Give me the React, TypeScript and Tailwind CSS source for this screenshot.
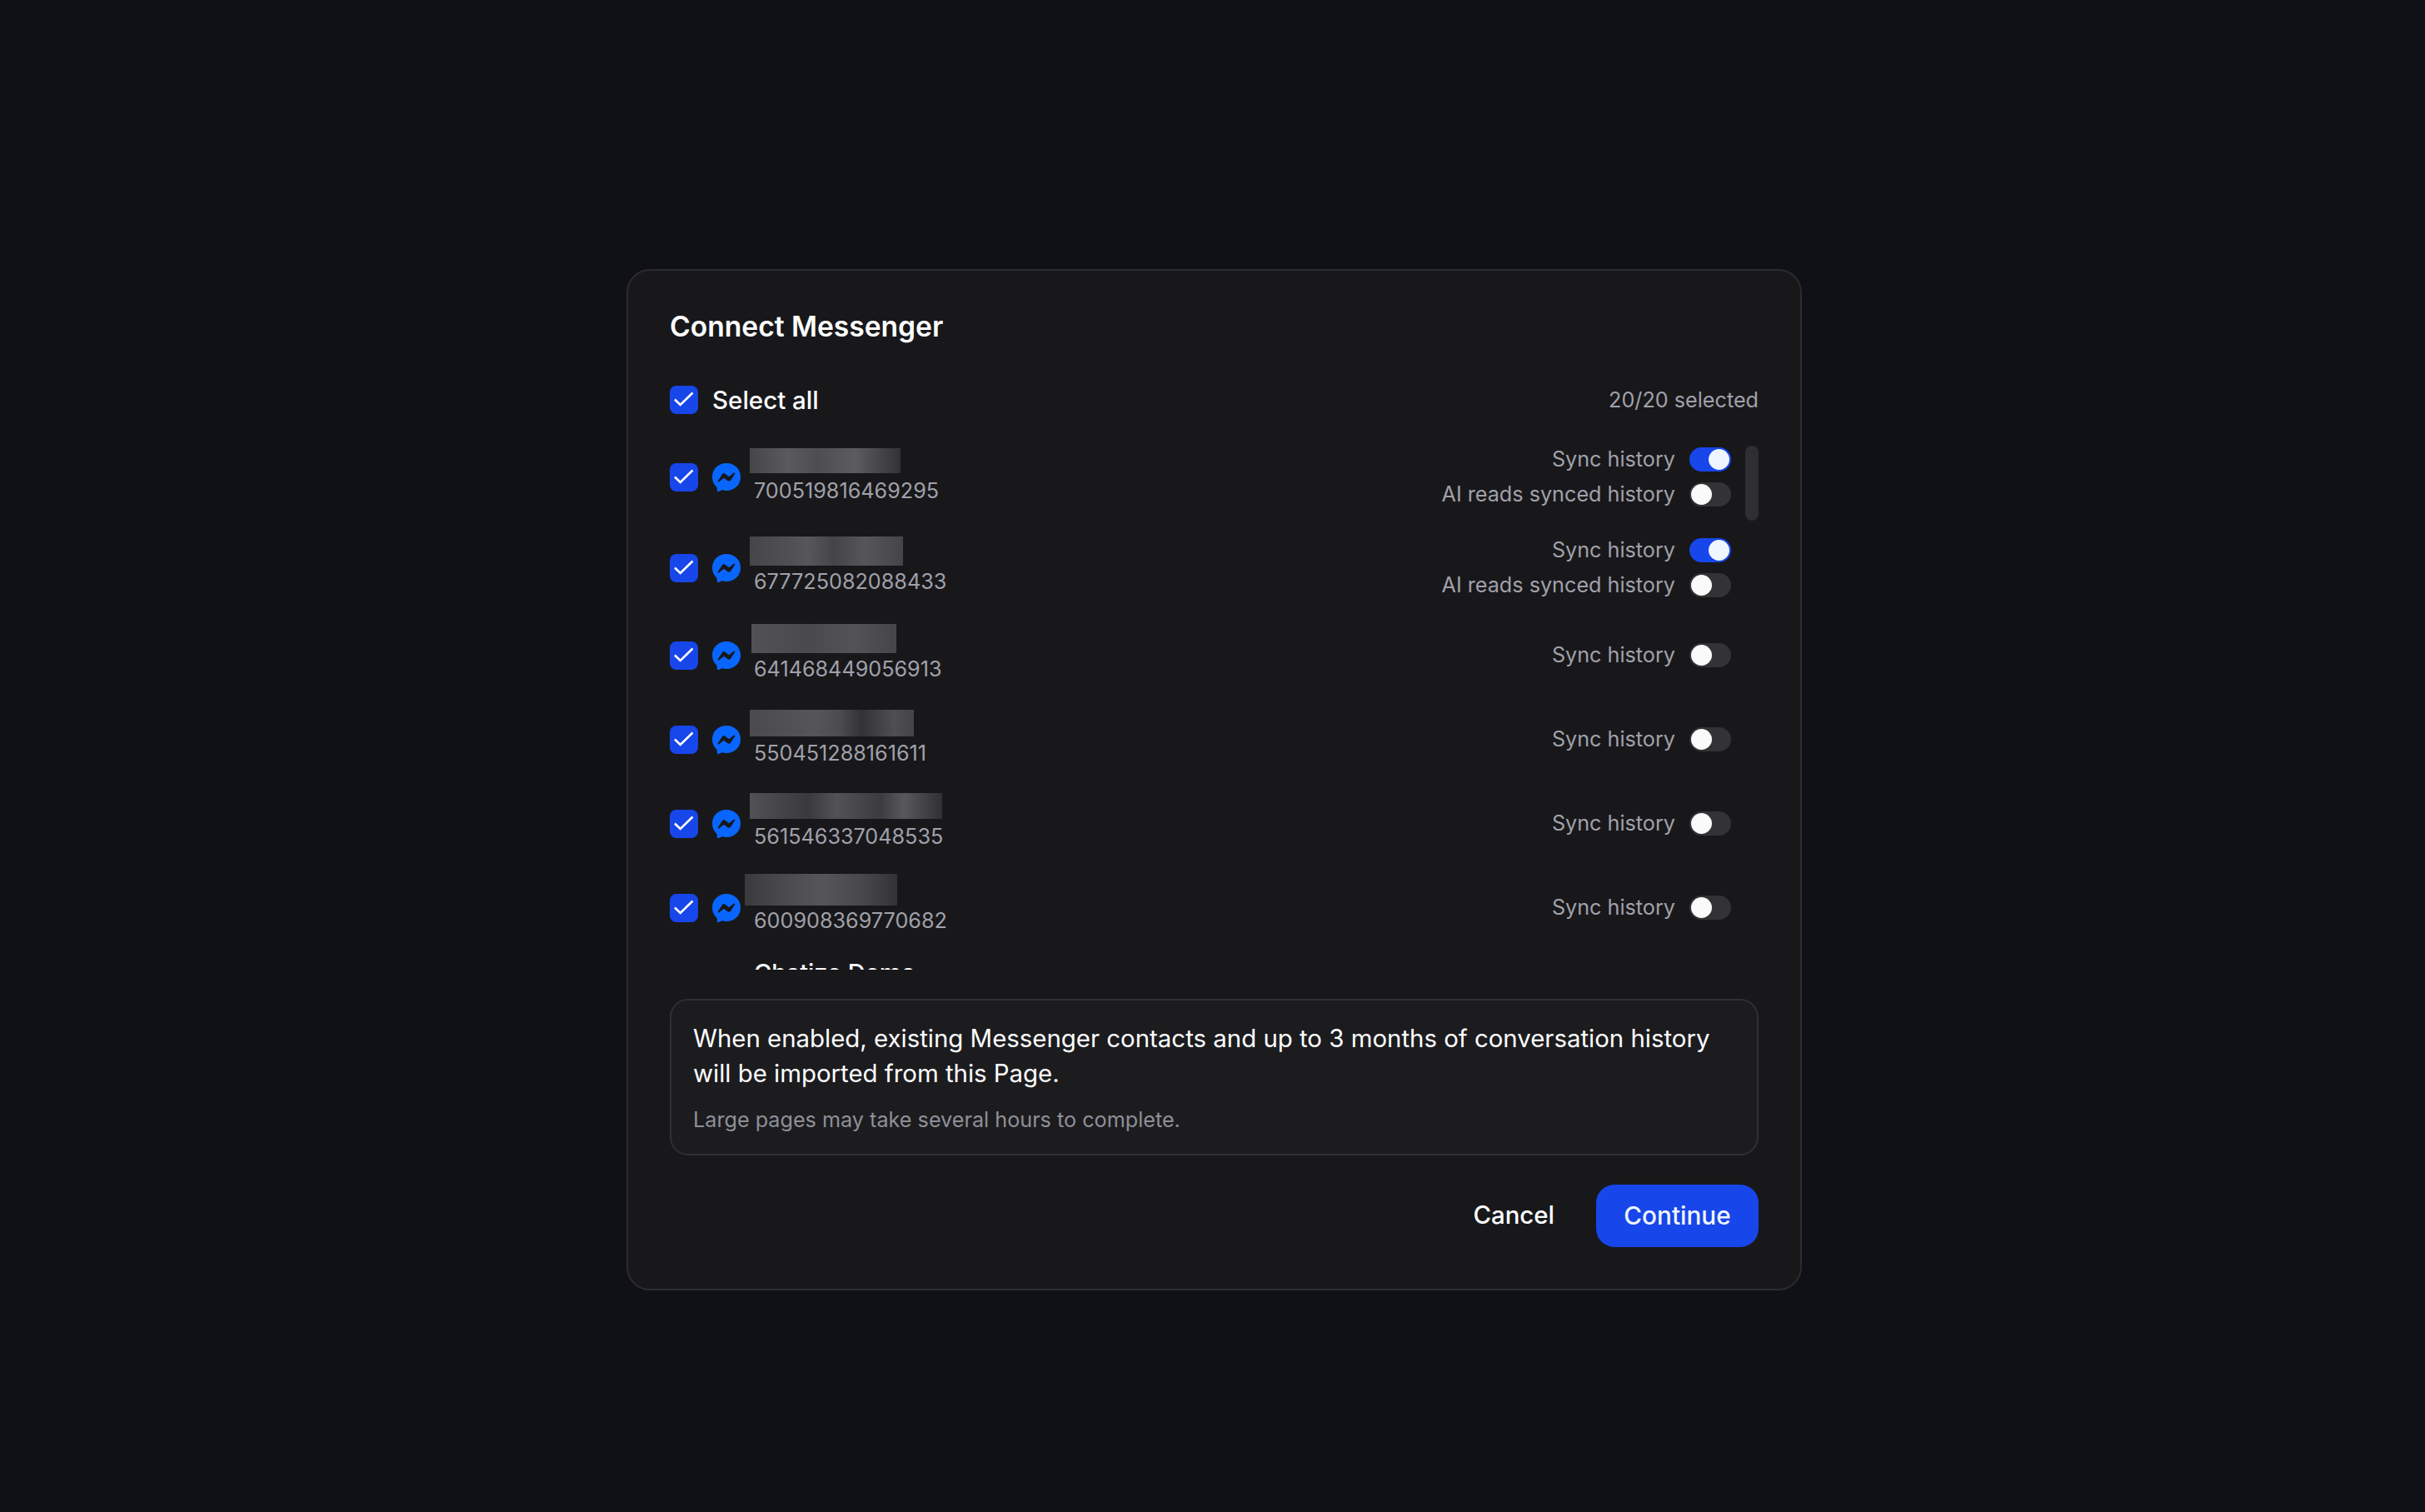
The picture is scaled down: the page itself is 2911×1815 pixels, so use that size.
import { SiMessenger } from "react-icons/si";

const FONT = "font-['Inter','Liberation_Sans',sans-serif]";

function CheckBox() {
  return (
    <div className="flex h-[34px] w-[34px] shrink-0 items-center justify-center rounded-[8px] bg-[#1746ea]">
      <svg width="34" height="34" viewBox="0 0 34 34" fill="none">
        <path d="M6 16.5 12.7 23 27.5 8.5" stroke="#fff" strokeWidth="2.6" />
      </svg>
    </div>
  );
}

function Toggle({ on }: { on?: boolean }) {
  return on ? (
    <div className="flex h-[29px] w-[50px] shrink-0 items-center justify-end rounded-full bg-[#1746ea] pr-[2px]">
      <div className="h-[25px] w-[25px] rounded-full bg-[#eff6ff]" />
    </div>
  ) : (
    <div className="flex h-[29px] w-[50px] shrink-0 items-center justify-start rounded-full bg-[#333336] pl-[2px]">
      <div className="h-[25px] w-[25px] rounded-full bg-[#fafafa]" />
    </div>
  );
}

function Setting({ label, on }: { label: string; on?: boolean }) {
  return (
    <div className="flex h-[29px] items-center gap-[17px]">
      <span className="text-[25.2px] text-[#a1a1aa]">{label}</span>
      <Toggle on={on} />
    </div>
  );
}

type Row = {
  id: string;
  w: number;
  h: number;
  ml: string;
  blur: string;
  gap: string;
  end: string;
  ai?: boolean;
  on?: boolean;
  tall: boolean;
};

const rows: Row[] = [
  { id: "700519816469295", w: 181, h: 30, ml: "ml-[-5px]", gap: "mb-[4px]", end: "mb-[2px]", tall: true, on: true, ai: true, blur: "bg-[linear-gradient(90deg,#464648,#5a5a5c_25%,#4e4e50_45%,#5c5c5e_70%,#333335)]" },
  { id: "677725082088433", w: 184, h: 35, ml: "ml-[-5px]", gap: "mb-[2px]", end: "mb-[4px]", tall: true, on: true, ai: true, blur: "bg-[linear-gradient(90deg,#464648,#4e4e50_20%,#575759_38%,#454547_55%,#565658_75%,#454547)]" },
  { id: "641468449056913", w: 174, h: 35, ml: "ml-[-3px]", gap: "mb-[2px]", end: "mb-[5px]", tall: false, blur: "bg-[linear-gradient(90deg,#525254,#4a4a4c_40%,#535355_70%,#464648)]" },
  { id: "550451288161611", w: 197, h: 32, ml: "ml-[-5px]", gap: "mb-[3px]", end: "mb-[3px]", tall: false, blur: "bg-[linear-gradient(90deg,#4a4a4c,#565658_40%,#4c4c4e_55%,#333335_68%,#4f4f51_88%,#444446)]" },
  { id: "561546337048535", w: 231, h: 31, ml: "ml-[-5px]", gap: "mb-[4px]", end: "mb-[5px]", tall: false, blur: "bg-[linear-gradient(90deg,#525254,#3a3a3c_30%,#525254_45%,#3c3c3e_68%,#59595b_80%,#303032)]" },
  { id: "600908369770682", w: 183, h: 38, ml: "ml-[-11px]", gap: "mb-[1px]", end: "mb-[9px]", tall: false, blur: "bg-[linear-gradient(90deg,#3a3a3c,#4a4a4c_25%,#565658_50%,#4a4a4c_75%,#333335)]" },
];

export default function App() {
  return (
    <div className={`flex h-[1815px] w-full items-start justify-center bg-[#0f1117] pl-[4px] pt-[323px] ${FONT}`}>
      <div className="flex h-[1226px] w-[1411px] flex-col rounded-[28px] border-2 border-[#2c2c2f] bg-[#18181b] px-[50px]">
        <h2 className="mt-[44px] text-[33.6px] font-semibold leading-[46px] text-white">Connect Messenger</h2>

        <div className="mt-[46px] flex h-[38px] items-center justify-between">
          <div className="flex items-center gap-[17px]">
            <CheckBox />
            <span className="text-[29.5px] font-medium text-white">Select all</span>
          </div>
          <span className="mt-[1px] text-[25.2px] text-[#a1a1aa]">20/20 selected</span>
        </div>

        <div className="relative mt-[34px] h-[631px] overflow-hidden">
          <div className="absolute right-0 top-[2px] h-[90px] w-[16px] rounded-full bg-[#2f2f31]" />
          <div className="flex flex-col gap-[30px]">
            {rows.map((r) => (
              <div key={r.id} className={`flex items-center justify-between pr-[33px] ${r.tall ? "h-[79px]" : "h-[71px]"}`}>
                <div className="flex items-center">
                  <CheckBox />
                  <SiMessenger className="ml-[17px] shrink-0 text-[#0866ff]" size={34} />
                  <div className={`ml-[16px] flex flex-col items-start ${r.end}`}>
                    <div className={`${r.ml} ${r.gap} ${r.blur}`} style={{ width: r.w, height: r.h }} />
                    <span className="text-[25.2px] leading-[34px] text-[#a1a1aa]">{r.id}</span>
                  </div>
                </div>
                <div className="flex flex-col items-end gap-[13px]">
                  <Setting label="Sync history" on={r.on} />
                  {r.ai && <Setting label="AI reads synced history" />}
                </div>
              </div>
            ))}
            <div className="ml-[101px] mt-[-6px] h-[71px] text-[29px] font-medium leading-[38px] text-white">Chatize Demo</div>
          </div>
        </div>

        <div className="mt-[35px] rounded-[22px] border-2 border-[#303033] bg-[#1c1c1f] px-[26px] pb-[23px] pt-[25px]">
          <p className="text-[29.4px] leading-[42px] text-white">
            When enabled, existing Messenger contacts and up to 3 months of conversation history will be imported from this Page.
          </p>
          <p className="mt-[16px] text-[25.2px] leading-[36px] text-[#8f8f97]">Large pages may take several hours to complete.</p>
        </div>

        <div className="mt-[35px] flex items-center justify-end gap-[50px]">
          <span className="text-[29.4px] font-medium text-white">Cancel</span>
          <button className="flex h-[75px] w-[195px] items-center justify-center rounded-[22px] bg-[#1746ea] text-[29.7px] font-medium text-[#eff6ff]">
            Continue
          </button>
        </div>
      </div>
    </div>
  );
}
